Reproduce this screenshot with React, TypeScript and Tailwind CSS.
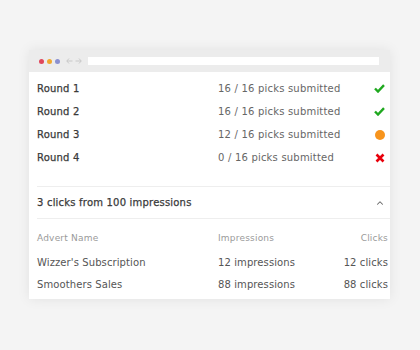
import { ChevronUp } from 'lucide-react';

const rounds = [
  { name: 'Round 1', picks: '16 / 16 picks submitted', status: 'done' },
  { name: 'Round 2', picks: '16 / 16 picks submitted', status: 'done' },
  { name: 'Round 3', picks: '12 / 16 picks submitted', status: 'partial' },
  { name: 'Round 4', picks: '0 / 16 picks submitted', status: 'none' },
];

const adverts = [
  { name: "Wizzer's Subscription", impressions: '12 impressions', clicks: '12 clicks' },
  { name: 'Smoothers Sales', impressions: '88 impressions', clicks: '88 clicks' },
];

function StatusIcon({ status }: { status: string }) {
  if (status === 'done') {
    return (
      <svg width="11" height="9" viewBox="0 0 11 9">
        <path d="M1 4.5 L4 7.5 L10 1.2" fill="none" stroke="#1fa81f" strokeWidth="2.4" />
      </svg>
    );
  }
  if (status === 'partial') {
    return <span className="block w-[10px] h-[10px] rounded-full bg-[#f7941d]" />;
  }
  return (
    <svg width="10" height="10" viewBox="0 0 10 10">
      <path d="M1.5 1.5 L8.5 8.5 M8.5 1.5 L1.5 8.5" stroke="#e8000b" strokeWidth="2.6" />
    </svg>
  );
}

export default function App() {
  return (
    <div className="w-[420px] h-[350px] bg-[#f4f4f4] pt-[50px] pl-[29px] font-['DejaVu_Sans',sans-serif]">
      <div className="w-[361px] h-[249px] bg-white shadow-[0_0_12px_rgba(0,0,0,0.08)] overflow-hidden">
        {/* browser bar */}
        <div className="h-[22px] bg-[#ececec] flex items-center pl-[10px] pr-[11px]">
          <div className="flex gap-[3px]">
            <span className="w-[5px] h-[5px] rounded-full bg-[#e0475b]" />
            <span className="w-[5px] h-[5px] rounded-full bg-[#f0a830]" />
            <span className="w-[5px] h-[5px] rounded-full bg-[#8a90d0]" />
          </div>
          <div className="flex gap-[2px] ml-[6px] text-[#c8c8c8]">
            <svg width="7" height="6" viewBox="0 0 7 6"><path d="M3 0.5 L0.8 3 L3 5.5 M0.8 3 H6.5" fill="none" stroke="currentColor" strokeWidth="1" /></svg>
            <svg width="7" height="6" viewBox="0 0 7 6"><path d="M4 0.5 L6.2 3 L4 5.5 M6.2 3 H0.5" fill="none" stroke="currentColor" strokeWidth="1" /></svg>
          </div>
          <div className="ml-[6px] flex-1 h-[8px] bg-white" />
        </div>

        <div className="pl-[8px] pt-[5px]">
          {rounds.map((r) => (
            <div key={r.name} className="h-[23px] flex items-center text-[10px] tracking-[0.2px]">
              <span className="w-[181px] text-[#3a3a3a] [-webkit-text-stroke:0.25px_#3a3a3a]">{r.name}</span>
              <span className="flex-1 text-[#666]">{r.picks}</span>
              <span className="w-[20px] flex justify-center pr-[1px]">
                <StatusIcon status={r.status} />
              </span>
            </div>
          ))}

          <div className="mt-[17px] border-t border-[#eeeeee] h-[32px] flex items-center justify-between pr-[5px] text-[10px] tracking-[0.2px]">
            <span className="text-[#3a3a3a] [-webkit-text-stroke:0.25px_#3a3a3a]">3 clicks from 100 impressions</span>
            <ChevronUp size={10} strokeWidth={2.5} className="text-[#666]" />
          </div>

          <div className="border-t border-[#eeeeee] pt-[12px] pr-[2px]">
            <div className="h-[16px] flex items-center text-[9px] tracking-[0.2px] text-[#9a9a9a]">
              <span className="w-[181px]">Advert Name</span>
              <span className="flex-1">Impressions</span>
              <span>Clicks</span>
            </div>
            <div className="pt-[4px]">
              {adverts.map((a) => (
                <div key={a.name} className="h-[22px] flex items-center text-[10px] tracking-[0.1px] text-[#555]">
                  <span className="w-[181px]">{a.name}</span>
                  <span className="flex-1">{a.impressions}</span>
                  <span>{a.clicks}</span>
                </div>
              ))}
            </div>
          </div>
        </div>
      </div>
    </div>
  );
}
